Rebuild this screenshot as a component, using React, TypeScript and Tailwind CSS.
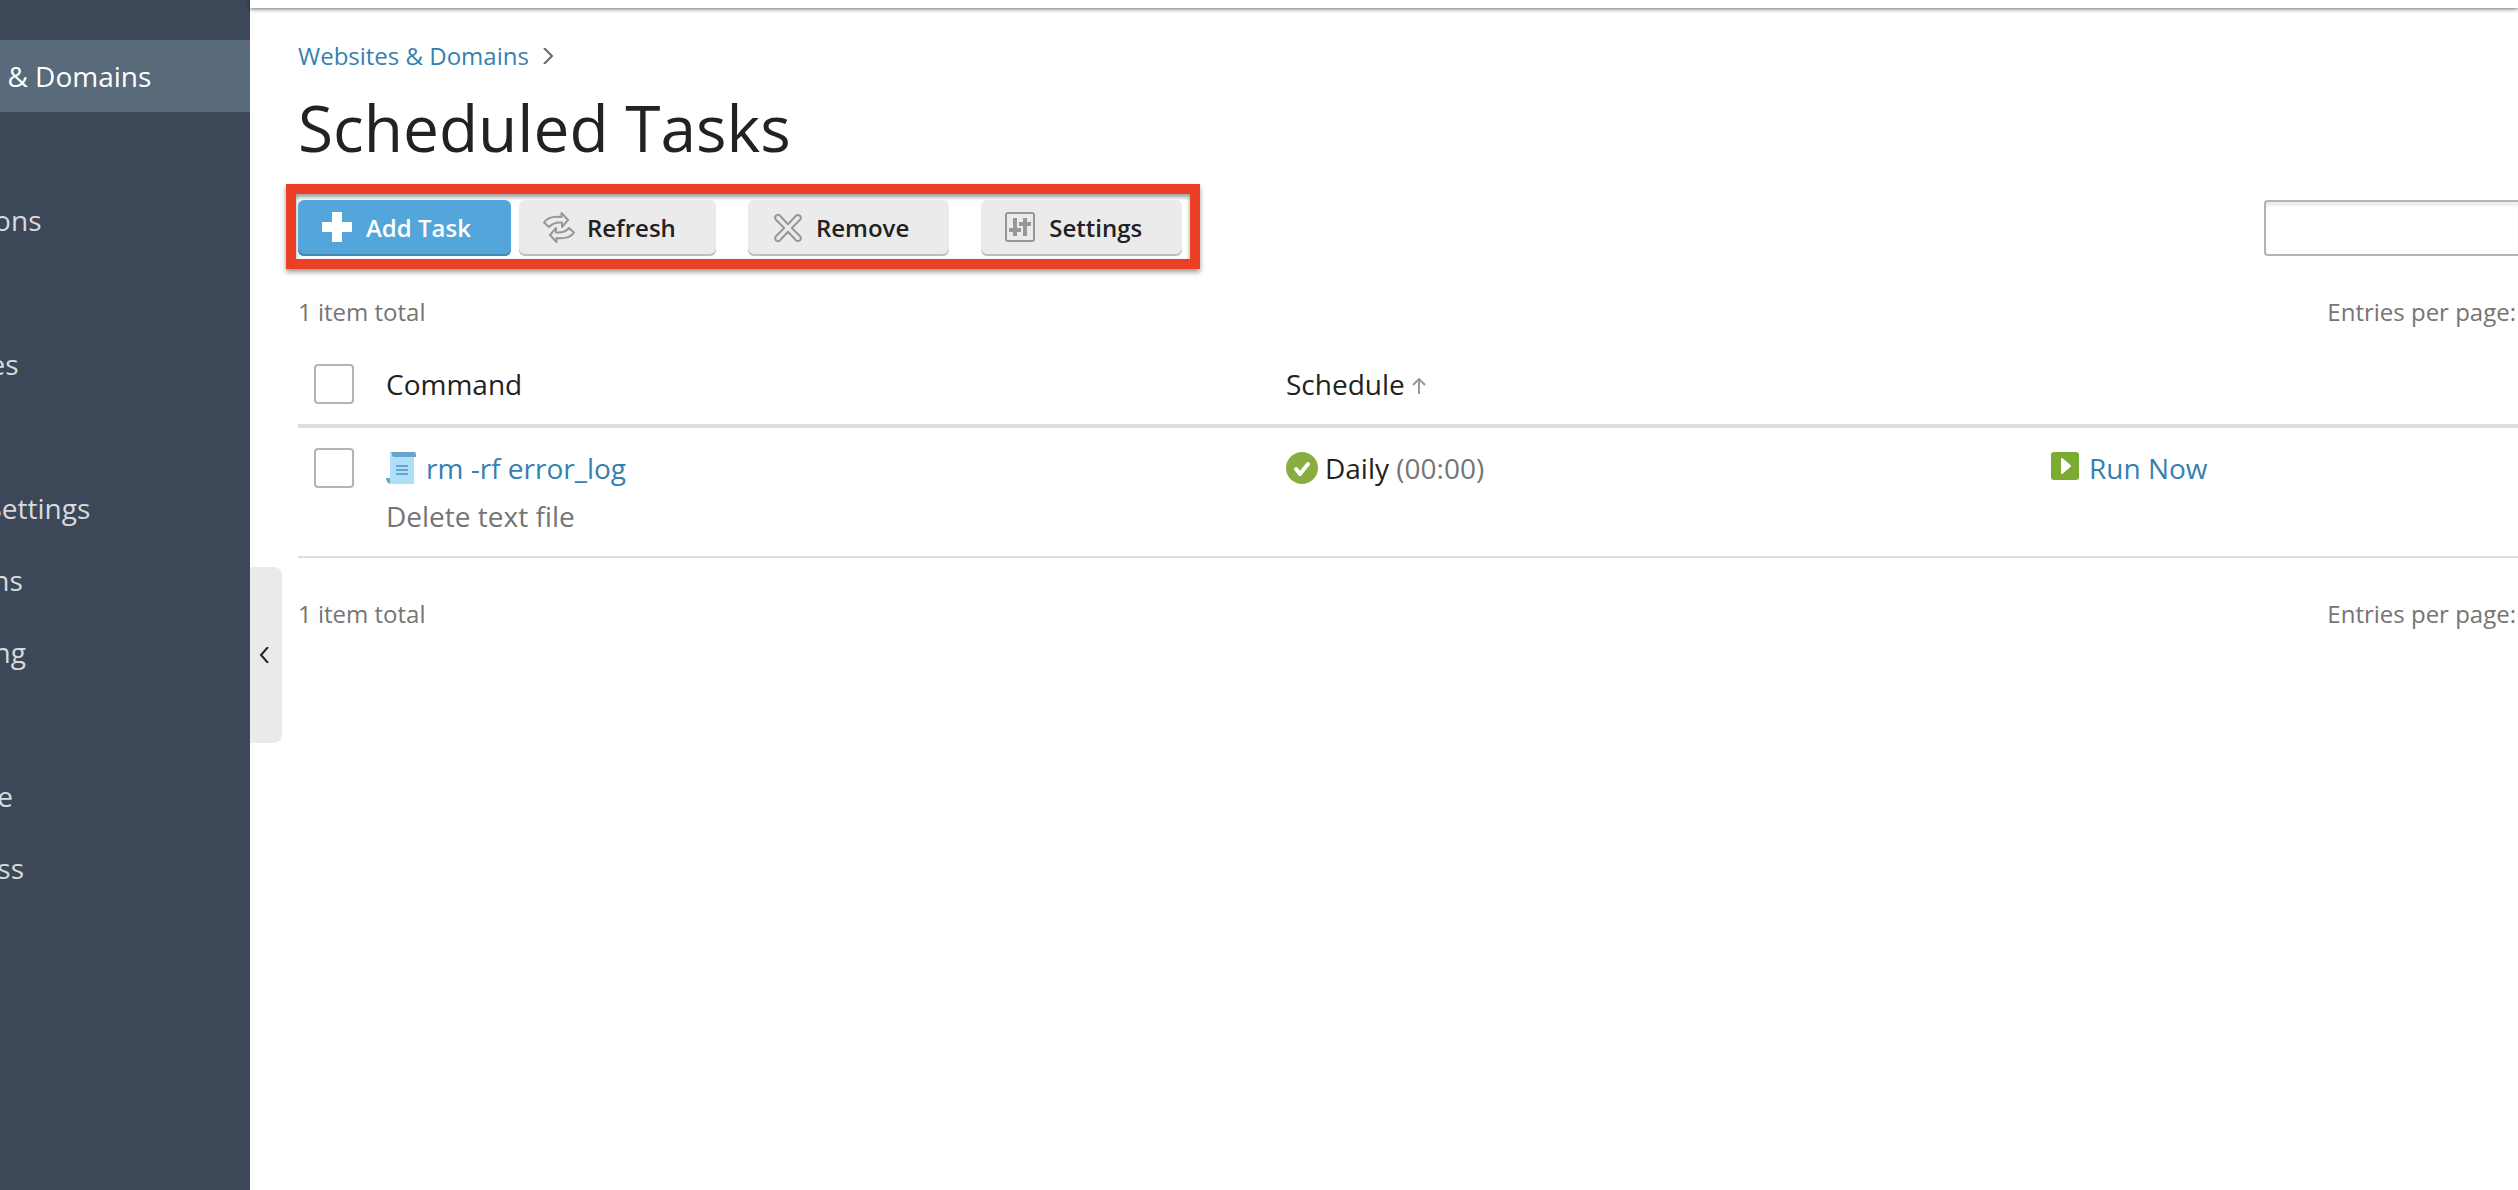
import type { ReactNode } from "react";

const menuGroups = [
  [{ label: "Websites & Domains", active: true }],
  [{ label: "Applications" }],
  [{ label: "Databases" }],
  [{ label: "Tools & Settings" }, { label: "Extensions" }, { label: "Monitoring" }],
  [{ label: "My Profile" }, { label: "WordPress" }],
] as { label: string; active?: boolean }[][];

function AddIcon() {
  return (
    <svg className="size-8" viewBox="0 0 32 32" fill="currentColor" aria-hidden="true">
      <path d="M10 0h10v10h10v10H20v10H10V20H0V10h10z" />
    </svg>
  );
}

function RefreshIcon() {
  return (
    <svg className="size-8 text-[#979797]" viewBox="0 0 32 32" fill="none" stroke="currentColor" strokeWidth="2" strokeLinejoin="round" aria-hidden="true">
      <path d="M1 10.500C4 6 10 4 18.500 5V1L25 8l-6 7v-4.500c-6-.5-9.500.5-13 4.500z" />
      <path d="M31 20.500C28 25 22 27 13.500 26v4L7 23l6-7v4.500c6 .5 9.500-.5 13-4.500z" />
    </svg>
  );
}

function RemoveIcon() {
  return (
    <svg className="size-8 text-[#979797]" viewBox="0 0 32 32" fill="none" stroke="currentColor" strokeWidth="2" strokeLinejoin="round" aria-hidden="true">
      <path d="M16 12.200 24 3.800a2.600 2.600 0 0 1 4 4L19.800 16l8.200 8.200a2.600 2.600 0 0 1-4 4L16 19.800l-8 8.400a2.600 2.600 0 0 1-4-4L12.200 16 4 7.800a2.600 2.600 0 0 1 4-4z" />
    </svg>
  );
}

function SettingsIcon() {
  return (
    <svg className="size-8 text-[#979797]" viewBox="0 0 32 32" fill="none" stroke="currentColor" aria-hidden="true">
      <rect x="1" y="1" width="28" height="28" rx="2" strokeWidth="2" />
      <path d="M10 6v18M20 6v18" strokeWidth="4" />
      <path d="M4 18h12M14 12h12" strokeWidth="4" />
    </svg>
  );
}

function ScriptIcon() {
  return (
    <svg className="h-8 w-[30px]" viewBox="0 0 30 32" aria-hidden="true">
      <path d="M4 0h24v32H4z" fill="#afdff8" />
      <path d="M4 0h24a2 2 0 0 1 2 2v3H8a2 2 0 0 1-2-2V1z" fill="#67a5cd" />
      <path d="M0 26h4v6C1.500 31 0 29 0 26z" fill="#67a5cd" />
      <path d="M10 14h12M10 18h12M10 22h12" stroke="#67a5cd" strokeWidth="2" />
    </svg>
  );
}

function OkIcon() {
  return (
    <svg className="size-8" viewBox="0 0 32 32" aria-hidden="true">
      <circle cx="16" cy="16" r="16" fill="#8aad41" />
      <path d="m10 17 4 5 8-10" fill="none" stroke="#fff" strokeWidth="4" strokeLinecap="round" strokeLinejoin="round" />
    </svg>
  );
}

function RunIcon() {
  return (
    <svg className="mt-2 size-7" viewBox="0 0 28 28" aria-hidden="true">
      <rect width="28" height="28" rx="3" fill="#7aab32" />
      <path d="M11 7 19 14l-8 7z" fill="#fff" stroke="#fff" strokeWidth="2" strokeLinejoin="round" />
    </svg>
  );
}

function ToolButton({ icon, children }: { icon: ReactNode; children: ReactNode }) {
  return (
    <button
      type="button"
      className="flex h-14 items-center gap-3 rounded-md bg-[#ebebeb] pr-10 pl-6 font-semibold shadow-[inset_0_-2px_0_#bebebe]"
    >
      {icon}
      {children}
    </button>
  );
}

function Check({ label }: { label: string }) {
  return (
    <input
      type="checkbox"
      aria-label={label}
      className="block size-10 appearance-none rounded-sm border-2 border-[#b4b4b4] bg-white checked:bg-[#53a6d9]"
    />
  );
}

function ListInfo() {
  return (
    <div className="flex justify-between pr-0.5 text-2xl/8 text-[#757575]">
      <span>1 item total</span>
      <span>Entries per page:</span>
    </div>
  );
}

export default function App() {
  return (
    <div className="flex min-h-screen overflow-hidden bg-white font-['Open_Sans','Noto_Sans',sans-serif] text-[28px] text-[#222]">
      <aside className="w-[250px] shrink-0 overflow-hidden bg-[#3c4858] pt-10">
        {/* the menu is scrolled sideways, so labels start left of the edge */}
        <nav className="-ml-[118px] flex flex-col gap-18">
          {menuGroups.map((group) => (
            <ul key={group[0].label}>
              {group.map((item) => (
                <li key={item.label} className={item.active ? "bg-[#596a7b] text-white" : "text-[#d8dade]"}>
                  <a href="#" className="block text-[28px]/[72px] whitespace-nowrap">
                    {item.label}
                  </a>
                </li>
              ))}
            </ul>
          ))}
        </nav>
      </aside>

      <div className="relative flex min-w-0 grow flex-col">
        <div className="h-2 shadow-[0_1px_4px_rgba(0,0,0,0.6)]" />

        <button
          type="button"
          aria-label="Collapse menu"
          className="absolute top-[567px] left-0 flex h-44 w-8 items-center rounded-r-lg bg-[#eaeaea] pl-2"
        >
          <svg className="h-4 w-3" viewBox="0 0 12 16" fill="none" stroke="#222" strokeWidth="2" aria-hidden="true">
            <path d="M10 0 3 8l7 8" />
          </svg>
        </button>

        <main className="pt-8 pl-12">
          <div className="flex items-center gap-3.5 text-2xl/8">
            <a href="#" className="text-[#3680b1]">
              Websites &amp; Domains
            </a>
            <svg className="h-4 w-3" viewBox="0 0 12 16" fill="none" stroke="#666" strokeWidth="2" aria-hidden="true">
              <path d="m1 0 8 8-8 8" />
            </svg>
          </div>

          <h1 className="mt-4 text-[64px]/20">Scheduled Tasks</h1>

          <div className="mt-4 flex items-start justify-between">
            <div className="-ml-3 flex items-start border-10 border-[#eb4026] pt-1.5 pr-2 pb-[3px] pl-0.5 text-2xl shadow-[0_3px_5px_rgba(0,0,0,0.4),inset_0_3px_4px_rgba(0,0,0,0.4)]">
              <button
                type="button"
                className="mr-2 flex h-14 items-center gap-3 rounded-md bg-[#53a6d9] pr-10 pl-6 font-semibold text-white shadow-[inset_0_-2px_0_#4386b0]"
              >
                <AddIcon />
                Add Task
              </button>
              <div className="flex gap-8">
                <ToolButton icon={<RefreshIcon />}>Refresh</ToolButton>
                <ToolButton icon={<RemoveIcon />}>Remove</ToolButton>
                <ToolButton icon={<SettingsIcon />}>Settings</ToolButton>
              </div>
            </div>
            <div className="pt-4">
              <input
                type="search"
                aria-label="Search tasks"
                className="block h-14 w-[254px] rounded-l-sm border-2 border-r-0 border-[#b4b4b4] bg-white px-3 text-2xl shadow-[inset_0_4px_2px_#eee]"
              />
            </div>
          </div>

          <div className="mt-[27px]">
            <ListInfo />
          </div>

          <table className="mt-4 mb-10 w-full table-fixed border-separate border-spacing-0 text-left text-[28px]/12">
            <thead className="[&_th]:border-b-4 [&_th]:border-[#ddd]">
              <tr>
                <th className="w-18 px-4 py-4">
                  <Check label="Select all tasks" />
                </th>
                <th className="w-[40.54%] p-4 font-normal">Command</th>
                <th className="w-[34.46%] p-4 font-normal">
                  <span className="flex items-center gap-1.5">
                    Schedule
                    <svg className="mt-1 size-4" viewBox="0 0 16 16" fill="none" stroke="#999" strokeWidth="2" aria-hidden="true">
                      <path d="M8 16V1M2 7l6-6 6 6" />
                    </svg>
                  </span>
                </th>
                <th className="p-4" aria-label="Actions" />
              </tr>
            </thead>
            <tbody className="[&_td]:border-b-2 [&_td]:border-[#ddd]">
              <tr className="align-top">
                <td className="px-4 py-5">
                  <Check label="Select rm -rf error_log" />
                </td>
                <td className="p-4">
                  <a href="#" className="flex items-center gap-2.5 text-[#3680b1]">
                    <ScriptIcon />
                    rm -rf error_log
                  </a>
                  <div className="text-[#757575]">Delete text file</div>
                </td>
                <td className="p-4">
                  <div className="flex items-center gap-[7px]">
                    <OkIcon />
                    <span>
                      Daily <span className="text-[#757575]">(00:00)</span>
                    </span>
                  </div>
                </td>
                <td className="p-4">
                  <a href="#" className="flex items-start gap-2.5 text-[#3680b1]">
                    <RunIcon />
                    Run Now
                  </a>
                </td>
              </tr>
            </tbody>
          </table>

          <ListInfo />
        </main>
      </div>
    </div>
  );
}
